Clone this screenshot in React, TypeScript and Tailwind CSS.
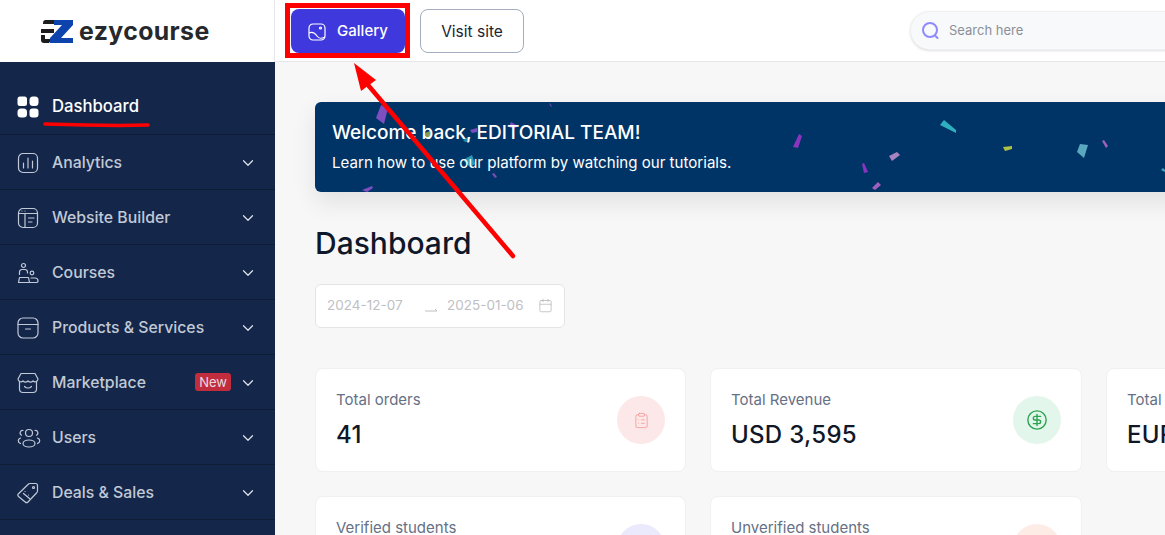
import { ChevronDown, CircleDollarSign, Calendar, ClipboardList } from "lucide-react";
import type { ReactNode } from "react";

const iconProps = {
  width: 22,
  height: 22,
  viewBox: "0 0 22 22",
  fill: "none",
  stroke: "currentColor",
  strokeWidth: 1.2,
  strokeLinecap: "round" as const,
  strokeLinejoin: "round" as const,
};

const navItems: { label: string; badge?: string; icon: ReactNode }[] = [
  {
    label: "Analytics",
    icon: (
      <svg {...iconProps}>
        <rect x="1.5" y="1.5" width="19" height="19" rx="4.5" />
        <path d="M6.5 11v5M11 6v10M15.5 9v7" />
      </svg>
    ),
  },
  {
    label: "Website Builder",
    icon: (
      <svg {...iconProps}>
        <rect x="1.5" y="1.5" width="19" height="19" rx="4.5" />
        <path d="M1.5 6.5h19M8 6.5v14M11.5 11h5.5M11.5 15h3.5M5 4h.01M8 4h.01" />
      </svg>
    ),
  },
  {
    label: "Courses",
    icon: (
      <svg {...iconProps}>
        <circle cx="6.5" cy="3.5" r="2" />
        <path d="M2.5 12.5V10a2.5 2.5 0 0 1 2.5-2.5h3a2.5 2.5 0 0 1 2.5 2.5v1" />
        <circle cx="15" cy="11" r="1.8" />
        <path d="M1.5 20.5h11l-1-5H2.5zM12.5 20.5h7.5a1.5 1.5 0 0 0 1-1.5 3 3 0 0 0-3-3h-4" />
      </svg>
    ),
  },
  {
    label: "Products & Services",
    icon: (
      <svg {...iconProps}>
        <rect x="1" y="1" width="20" height="20" rx="5" />
        <path d="M1 7.5h20M8.5 12h5" />
      </svg>
    ),
  },
  {
    label: "Marketplace",
    badge: "New",
    icon: (
      <svg {...iconProps}>
        <path d="M4 1.500h14l3 5.500a3 3 0 0 1-5 2 3.600 3.600 0 0 1-5 0 3.600 3.600 0 0 1-5 0 3 3 0 0 1-5-2z" />
        <path d="M2.500 9.500V17a3.500 3.500 0 0 0 3.500 3.500h10a3.500 3.500 0 0 0 3.500-3.500V9.500M7.500 14.500c2 2 5 2 7 0" />
      </svg>
    ),
  },
  {
    label: "Users",
    icon: (
      <svg {...iconProps} width={24} viewBox="0 0 24 22">
        <circle cx="12" cy="6" r="3.500" />
        <ellipse cx="12" cy="16.500" rx="6" ry="3.500" />
        <path d="M6 3.500a2.500 2.500 0 0 0-1.500 4.700M18 3.500a2.500 2.500 0 0 1 1.500 4.700M3.500 11c-3 1.200-3 4 0 5.500M20.500 11c3 1.200 3 4 0 5.500" />
      </svg>
    ),
  },
  {
    label: "Deals & Sales",
    icon: (
      <svg {...iconProps}>
        <path d="M13 1.500h5.500a2 2 0 0 1 2 2V9a3 3 0 0 1-1 2l-8.500 9a2 2 0 0 1-2.800 0L1.500 14.500a2 2 0 0 1 0-2.800L11 2.500a3 3 0 0 1 2-1z" />
        <circle cx="16.500" cy="5.500" r="1" />
        <path d="M6.500 11.500l6 5M8 9.500h.01M11.500 13h.01" />
      </svg>
    ),
  },
];

const confetti: { points: string; fill: string }[] = [
  { points: "381,105 388,108 384,124 376,118", fill: "#7d4fc0" },
  { points: "549,103 551,104 552,107 550,106", fill: "#5a3f9f" },
  { points: "511,122 518,126 514,129 509,127", fill: "#7a4db8" },
  { points: "470,130 477,128 477,132 472,133", fill: "#7a4db8" },
  { points: "463,140 468,137 470,142 465,142", fill: "#1f8aa8" },
  { points: "463,160 472,155 475,164 470,167", fill: "#2a9bb5" },
  { points: "492,174 494,173 497,177 495,178", fill: "#7a4db8" },
  { points: "362,190 372,186 373,188 367,192", fill: "#7d4fc0" },
  { points: "425,133 430,131 430,137 426,138", fill: "#8a9a50" },
  { points: "799,134 802,136 798,148 793,147", fill: "#8a35c0" },
  { points: "889,156 897,152 900,155 892,161", fill: "#a784c0" },
  { points: "862,164 864,163 868,172 864,173", fill: "#8a35c0" },
  { points: "872,188 878,182 881,185 875,190", fill: "#a060c0" },
  { points: "944,120 956,130 956,133 940,125", fill: "#2fb0c0" },
  { points: "1003,147 1012,146 1012,149 1005,151", fill: "#b0c040" },
  { points: "1080,144 1088,145 1084,158 1077,152", fill: "#5aa8c0" },
  { points: "1102,141 1104,140 1108,146 1106,148", fill: "#a060c0" },
  { points: "1161,170 1163,168 1165,170 1165,172", fill: "#3aa8c0" },
];

function NavRow({ label, badge, icon }: { label: string; badge?: string; icon: ReactNode }) {
  return (
    <div className="flex h-[55px] items-center border-b border-[#0f1c36] pl-[17px] pr-[18px] pt-[2px] text-[#c2c9d6]">
      <span className="flex w-[35px] shrink-0">{icon}</span>
      <span className="flex-1 text-[15.800px] font-medium">{label}</span>
      {badge && (
        <span className="mb-[3px] mr-[8px] rounded-[3px] bg-[#c22d3e] px-1 text-[13px] leading-[18px] text-[#e6dce0]">{badge}</span>
      )}
      <ChevronDown size={18} strokeWidth={1.6} className="text-[#dfe3ea]" />
    </div>
  );
}

function StatCard({ title, value, circle, icon }: { title: string; value: string; circle: string; icon?: ReactNode }) {
  return (
    <div className="flex h-[104px] items-center justify-between rounded-lg border border-[#f0f0f2] bg-white pl-5 pr-5">
      <div className="flex flex-col whitespace-nowrap">
        <span className="text-[15px] leading-[22px] text-[#667085]">{title}</span>
        <span className="mt-[8px] text-[24px] font-medium leading-8 tracking-[0.3px] text-[#101828]">{value}</span>
      </div>
      <span className={`flex h-12 w-12 shrink-0 items-center justify-center rounded-full ${circle}`}>{icon}</span>
    </div>
  );
}

export default function App() {
  return (
    <div className="relative flex h-[535px] w-[1165px] overflow-hidden bg-[#f7f7f7] font-['Inter',sans-serif]">
      <aside className="flex w-[275px] shrink-0 flex-col">
        <div className="flex h-[62px] items-center gap-[6px] border-r border-[#e5e7eb] bg-white pl-10">
          <svg width="33" height="25" viewBox="0 0 33 25">
            <path d="M5 1h11v4H3V4a3 3 0 0 1 2-3zM1 10h13v4H1zM4 24a3 3 0 0 1-3-3v-5h4v4h7l-3 4z" fill="#1d1d1f" />
            <path d="M14 1h19v5L21 19h12v5H10v-5L22 6h-8z" fill="#0d43ac" />
          </svg>
          <span className="text-[24.800px] font-bold leading-none tracking-[0.4px] text-[#26282c]">ezycourse</span>
        </div>
        <nav className="flex-1 bg-[#14274a] pt-4">
          <div className="flex h-[57px] items-center border-b border-[#0f1c36] pl-[17px] pt-[2px] text-white">
            <svg width="22" height="22" viewBox="0 0 22 22" fill="currentColor" className="mr-[13px]">
              <rect x="0.500" y="0.500" width="9.500" height="9.500" rx="2.500" />
              <rect x="12.500" y="0.500" width="9" height="9.500" rx="3.500" />
              <rect x="0.500" y="12.500" width="9.500" height="9" rx="3.500" />
              <rect x="12.500" y="12.500" width="9" height="9" rx="3" />
            </svg>
            <span className="text-[16.700px] font-medium">Dashboard</span>
          </div>
          {navItems.map((item) => (
            <NavRow key={item.label} {...item} />
          ))}
        </nav>
      </aside>

      <div className="flex min-w-0 flex-1 flex-col">
        <header className="flex h-[62px] shrink-0 items-center gap-[15px] border-b border-[#e5e7eb] bg-white pl-4">
          <button className="flex h-11 w-[114px] shrink-0 items-center justify-center gap-[11px] rounded-lg bg-[#3f38dd] pt-[2px] text-[15px] font-medium text-white">
            <svg width="18" height="18" viewBox="0 0 18 18" fill="none" stroke="currentColor" strokeWidth="1.200">
              <rect x="1" y="1" width="16" height="16" rx="4" />
              <circle cx="12.500" cy="5" r="1" />
              <path d="M1 10c4-2 6 0 8 3s4 3 8 1" />
            </svg>
            Gallery
          </button>
          <button className="h-11 w-[104px] shrink-0 rounded-lg border border-[#a3adbf] bg-white pt-[2px] text-[15.500px] text-[#1d2433]">Visit site</button>
          <div className="ml-[371px] flex h-[39px] w-[280px] shrink-0 items-center gap-[9px] rounded-full border border-[#eef0f3] bg-[#f8f9fb] pl-[10px] shadow-sm">
            <svg width="19" height="19" viewBox="0 0 19 19" fill="none" stroke="#8f8bff" strokeWidth="2" strokeLinecap="round">
              <circle cx="9" cy="9" r="7" />
              <path d="M14.500 15l2 2" />
            </svg>
            <span className="text-[13px] text-[#8b8f98]">Search here</span>
          </div>
        </header>

        <main className="flex flex-col pl-10 pt-10">
          <div className="relative h-[90px] w-[900px] shrink-0 overflow-hidden rounded-l-md bg-[#013466] pl-[17px] pt-[17px] text-white shadow-[0_10px_24px_rgba(0,0,0,0.09)]">
            <svg width="850" height="90" viewBox="315 102 850 90" className="absolute left-0 top-0">
              {confetti.map((c) => (
                <polygon key={c.points} points={c.points} fill={c.fill} />
              ))}
            </svg>
            <p className="relative text-[19px] font-medium leading-7">Welcome back, EDITORIAL TEAM!</p>
            <p className="relative mt-[6px] text-[15.100px] leading-5">Learn how to use our platform by watching our tutorials.</p>
          </div>

          <h1 className="mt-[31px] text-[30px] font-medium leading-10 text-[#0f172a]">Dashboard</h1>

          <div className="mt-[21px] flex h-[44px] w-[250px] items-center rounded-md border border-[#e4e4e7] bg-white pb-[2px] pl-[11px] pr-[11px] text-[13.500px] text-[#c0c0c4]">
            <span className="w-[97px]">2024-12-07</span>
            <svg width="15" height="8" viewBox="0 0 15 8" fill="none" stroke="#c0c0c4" strokeWidth="1" className="mt-2">
              <path d="M1 6h12l-2-2" />
            </svg>
            <span className="ml-[8px] flex-1">2025-01-06</span>
            <Calendar size={15} strokeWidth={1.200} className="text-[#b5b5b8]" />
          </div>

          <div className="mt-10 grid w-[910px] grid-cols-[371px_372px_371px] gap-x-6 gap-y-6">
            <StatCard
              title="Total orders"
              value="41"
              circle="bg-[#fce8e8]"
              icon={<ClipboardList size={17} strokeWidth={1} className="text-[#f58a8a]" />}
            />
            <StatCard
              title="Total Revenue"
              value="USD 3,595"
              circle="bg-[#e3f6ec]"
              icon={<CircleDollarSign size={22} strokeWidth={1.500} className="text-[#2ba24f]" />}
            />
            <StatCard title="Total" value="EUR" circle="bg-white" />
            <StatCard title="Verified students" value={"\u00a0"} circle="bg-[#ebe9fc]" />
            <StatCard title="Unverified students" value={"\u00a0"} circle="bg-[#fdece6]" />
          </div>
        </main>
      </div>

      {/* hand-drawn annotations on top of the screenshot */}
      <div className="absolute left-[285px] top-[3px] h-[55px] w-[125px] border-[5px] border-[#ff0000]" />
      <svg width="1165" height="535" viewBox="0 0 1165 535" className="pointer-events-none absolute left-0 top-0">
        <path d="M45 124c30 1 70 2 103 1" fill="none" stroke="#ff0000" strokeWidth="3.500" strokeLinecap="round" />
        <path d="M368 85L513 256" fill="none" stroke="#ff0000" strokeWidth="4.500" strokeLinecap="round" />
        <polygon points="354,63 376,80 361,91" fill="#ff0000" />
      </svg>
    </div>
  );
}
